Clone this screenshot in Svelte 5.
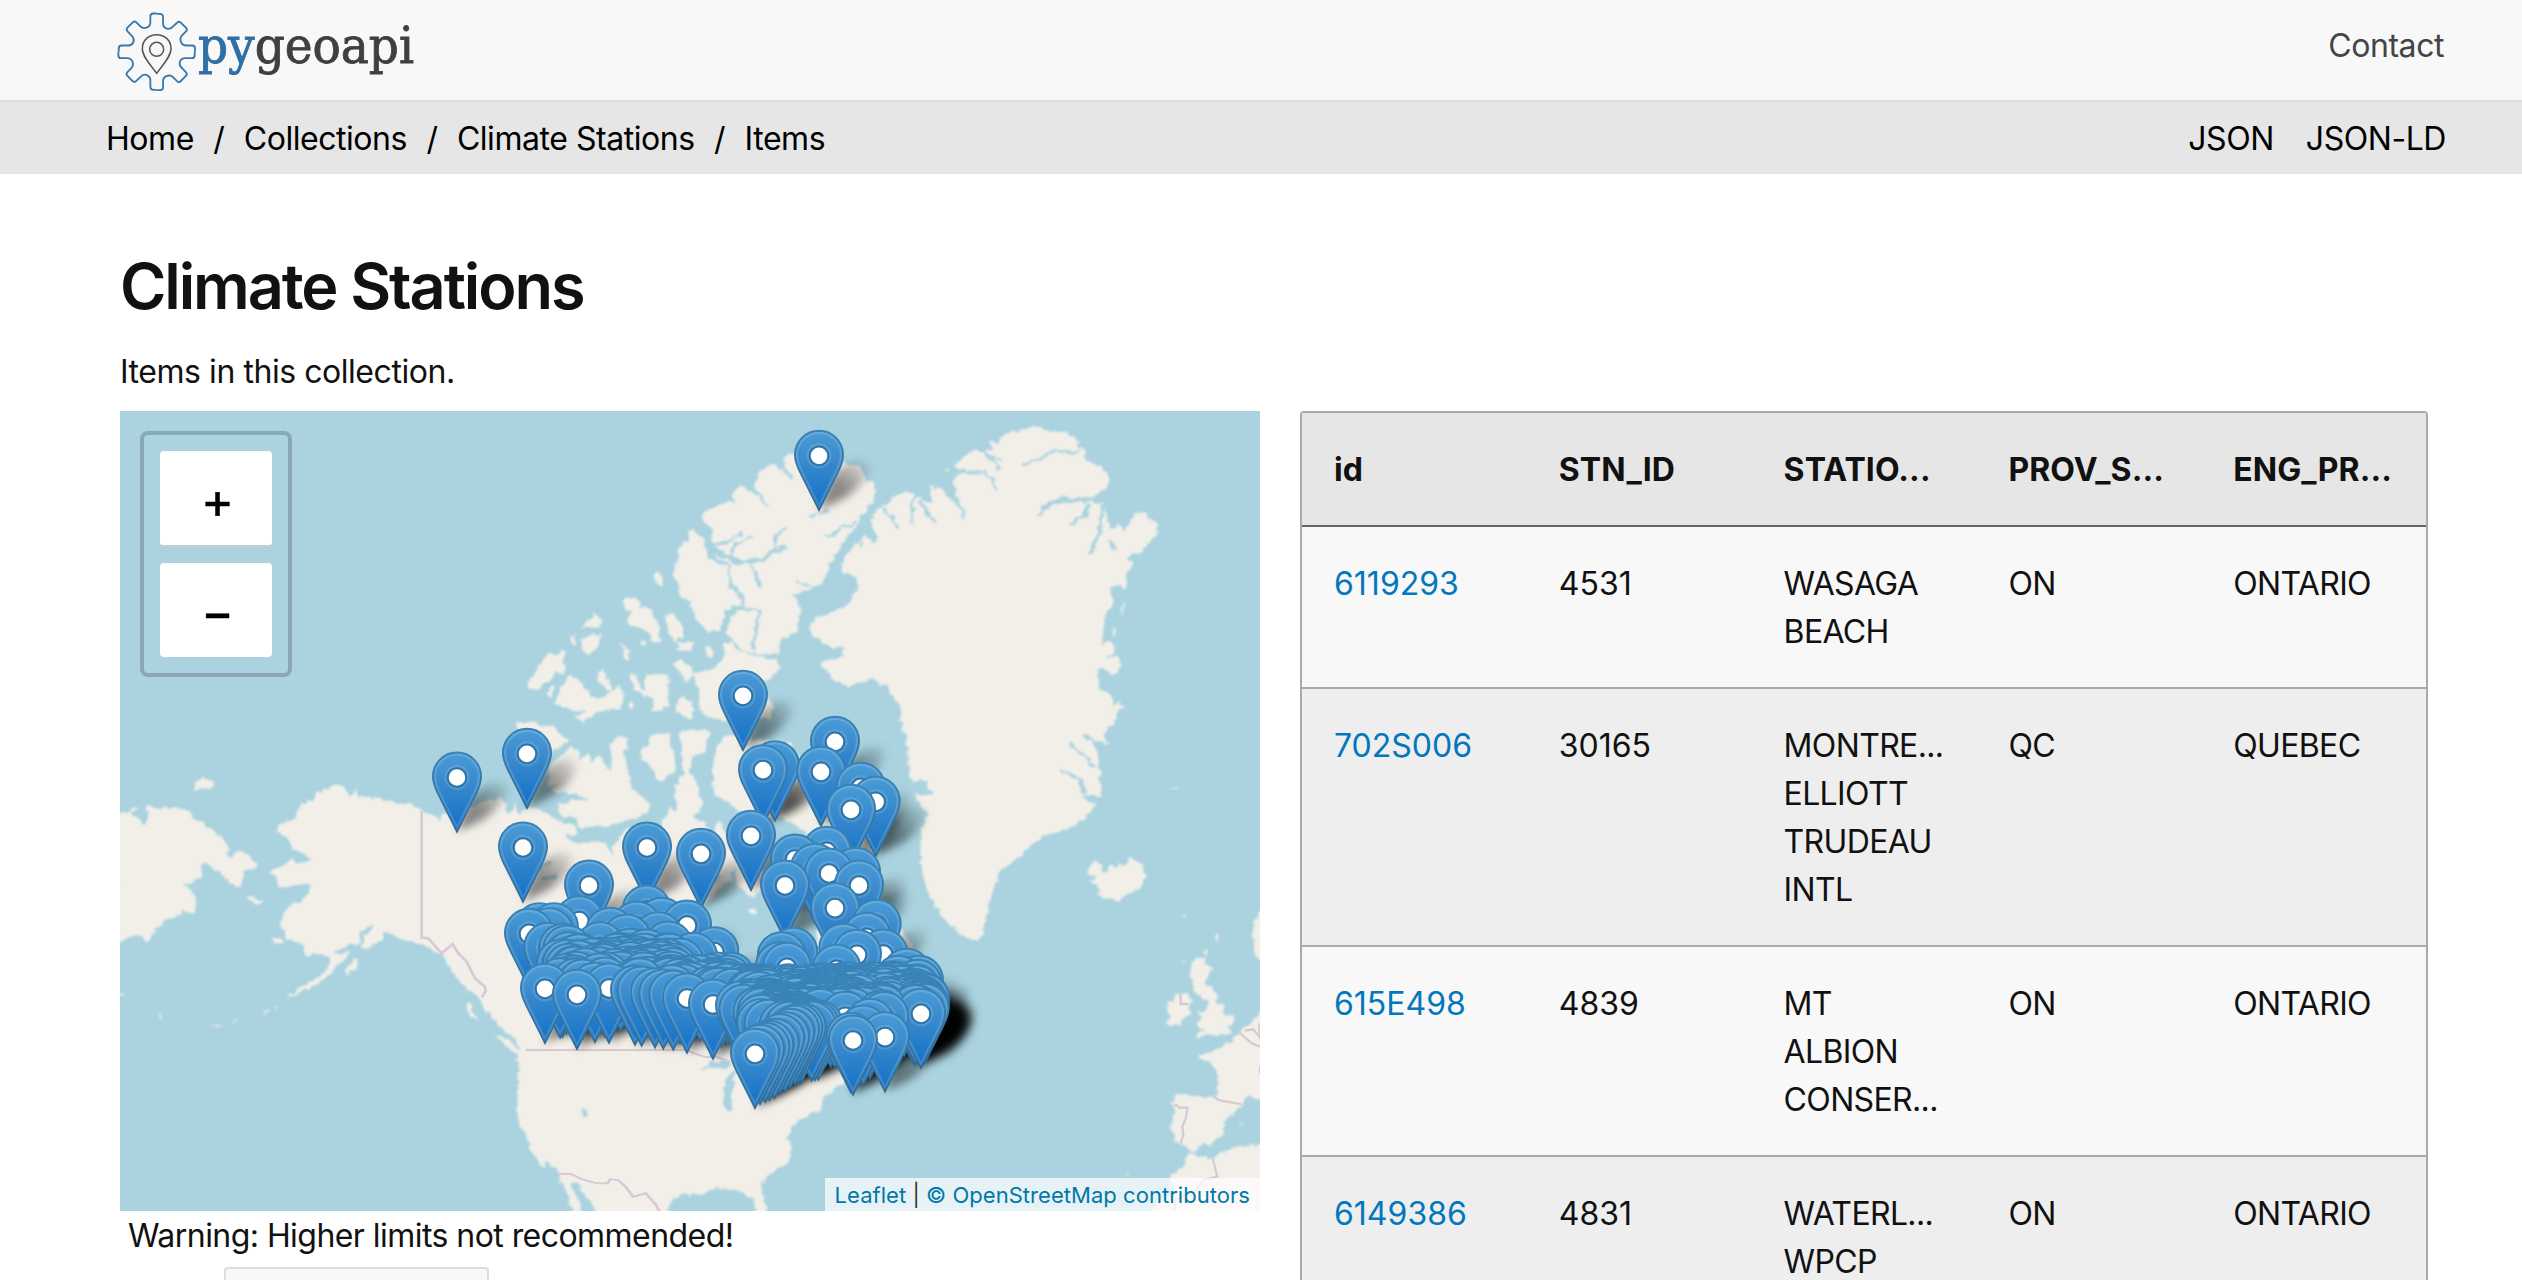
<script>
  const crumbs = ['Home', 'Collections', 'Climate Stations', 'Items'];
  const columns = ['id', 'STN_ID', 'STATIO...', 'PROV_S...', 'ENG_PR...'];
  const rows = [
    ['6119293', '4531', ['WASAGA', 'BEACH'], 'ON', 'ONTARIO'],
    ['702S006', '30165', ['MONTRE...', 'ELLIOTT', 'TRUDEAU', 'INTL'], 'QC', 'QUEBEC'],
    ['615E498', '4839', ['MT', 'ALBION', 'CONSER...'], 'ON', 'ONTARIO'],
    ['6149386', '4831', ['WATERL...', 'WPCP'], 'ON', 'ONTARIO'],
  ];

  // Marker head centres, in thirds of a pixel from (480, 680).
  const named = [
    [1017, -674], [-69, 291], [789, 46], [1065, 184], [885, 257], [849, 269], [1023, 274], [1142, 322],
    [1187, 364], [1113, 388], [141, 220], [813, 466], [129, 501], [501, 501], [663, 520], [327, 615],
    [1040, 514], [945, 537], [1005, 565], [1128, 577], [1047, 579], [915, 615], [1137, 615], [1065, 683],
    [298, 722], [500, 690], [178, 743], [222, 743], [207, 758], [147, 760], [390, 757], [470, 738],
    [545, 727], [621, 735], [205, 802], [440, 777], [535, 770], [565, 798], [640, 832], [703, 815],
    [360, 800], [250, 805], [262, 810], [300, 835], [410, 835], [450, 820], [500, 822], [530, 850],
    [195, 925], [291, 943], [387, 924], [345, 922], [465, 930], [485, 933], [525, 938], [550, 942],
    [580, 945], [621, 954], [699, 972], [780, 978], [1190, 733], [1160, 772], [1210, 822], [1131, 823],
    [1090, 805], [1070, 868], [940, 817], [905, 830], [921, 862], [900, 860], [1280, 880], [1310, 930],
    [1323, 1000], [1334, 985], [1215, 1070], [1119, 1080], [1112, 1072], [825, 1120], [995, 1038],
    [840, 1108], [856, 1102], [868, 1096], [884, 1090], [900, 1076], [915, 1070], [930, 1060], [945, 1050],
    [1015, 1034], [1150, 1050], [1170, 1030], [1005, 1036], [955, 1045], [965, 1042],
  ];

  let seed = 7;
  const rand = () => (seed = (seed * 16807) % 2147483647) / 2147483647;
  function scatter(n, x0, x1, y0, y1) {
    const pts = [];
    for (let i = 0; i < n; i++) pts.push([x0 + rand() * (x1 - x0), y0 + rand() * (y1 - y0)]);
    return pts;
  }
  const markers = [
    ...named,
    ...scatter(75, 240, 600, 830, 915),
    ...scatter(30, 560, 760, 890, 940),
    ...scatter(120, 790, 1130, 925, 1000),
    ...scatter(70, 830, 970, 980, 1040),
    ...scatter(60, 980, 1230, 920, 1010),
    ...scatter(35, 1210, 1325, 900, 970),
    ...scatter(25, 1300, 1336, 950, 990),
  ]
    .sort((a, b) => a[1] - b[1])
    .map(([x, y]) => [480 + x / 3, 680 + y / 3]);

  const quarter =
    'M0,-114 H10 Q19,-114 19,-105 V-85 Q19,-73 32,-69 Q42,-67 50,-77 L62,-88 Q67,-93 73,-87 L89,-71 Q93,-66 88,-61 L76,-49 Q68,-41 73,-29 Q77,-19 89,-19 H107 Q115,-19 115,-10 V0';
</script>

<header>
  <svg class="logo" width="340" height="100" viewBox="110 0 340 100" role="img" aria-label="pygeoapi">
    <g transform="translate(156.7 51.8) scale(0.3333)" fill="none" stroke="#3a78ac" stroke-width="5.5">
      {#each [0, 90, 180, 270] as a}
        <path d={quarter} transform="rotate({a})" />
      {/each}
    </g>
    <g transform="translate(110 0) scale(0.3333)" fill="none" stroke="#555" stroke-width="4.5">
      <path d="M140,220 C122,195 97,170 97,146 C97,120 117,104 140,104 C163,104 183,120 183,146 C183,170 158,195 140,220Z" />
      <circle cx="140" cy="148" r="21" />
    </g>
    <text class="brand" x="198" y="63" textLength="216" lengthAdjust="spacingAndGlyphs"><tspan class="py">py</tspan>geoapi</text>
  </svg>
  <a class="contact" href="#contact">Contact</a>
</header>
<nav>
  <ul>
    {#each crumbs as c, i}
      {#if i}<li>/</li>{/if}
      <li>{c}</li>
    {/each}
  </ul>
  <div class="formats"><a href="#json">JSON</a><a href="#jsonld">JSON-LD</a></div>
</nav>
<main>
  <h1>Climate Stations</h1>
  <p class="intro">Items in this collection.</p>
  <div class="grid">
    <section>
      <div class="map">
        <svg class="tiles" width="1140" height="800" viewBox="120 411 1140 800">
          <defs>
            <linearGradient id="pinFill" x1="0" y1="0" x2="0" y2="1">
              <stop offset="0" stop-color="#4a9cd6" />
              <stop offset="0.35" stop-color="#3b8bcd" />
              <stop offset="1" stop-color="#126fc6" />
            </linearGradient>
            <linearGradient id="pinEdge" x1="0" y1="0" x2="0" y2="1">
              <stop offset="0" stop-color="#3883b7" />
              <stop offset="1" stop-color="#2e6c97" />
            </linearGradient>
            <linearGradient id="shadeFill" gradientUnits="userSpaceOnUse" x1="0" y1="0" x2="46" y2="-46">
              <stop offset="0" stop-color="#000" stop-opacity="0.5" />
              <stop offset="0.5" stop-color="#000" stop-opacity="0.42" />
              <stop offset="1" stop-color="#000" stop-opacity="0.08" />
            </linearGradient>
            <filter id="coast" x="0" y="0" width="100%" height="100%">
              <feTurbulence type="fractalNoise" baseFrequency="0.13" numOctaves="2" seed="4" />
              <feDisplacementMap in="SourceGraphic" scale="8" xChannelSelector="R" yChannelSelector="G" />
              <feGaussianBlur stdDeviation="0.8" />
            </filter>
            <filter id="soft" filterUnits="userSpaceOnUse" x="120" y="411" width="1140" height="800">
              <feGaussianBlur stdDeviation="4.5" />
            </filter>
            <g id="pin">
              <path d="M0,-81 C-13.5,-81 -24,-70 -24,-57 C-24,-50 -21.5,-45 -19,-40 L0,-2 L19,-40 C21.5,-45 24,-50 24,-57 C24,-70 13.5,-81 0,-81Z" fill="url(#pinFill)" stroke="url(#pinEdge)" stroke-width="2" />
              <path d="M0,-79 C-12.2,-79 -22,-69 -22,-57 C-22,-50 -19.5,-45 -17,-40 L0,-6 L17,-40 C19.5,-45 22,-50 22,-57 C22,-69 12.2,-79 0,-79Z" fill="none" stroke="#fff" stroke-opacity="0.15" stroke-width="2.2" />
              <circle cy="-56" r="11.5" fill="none" stroke="#fff" stroke-opacity="0.13" stroke-width="2" />
              <circle cy="-56" r="9.3" fill="#fff" stroke="#2f73a6" stroke-width="2" />
            </g>
            <path id="shade" d="M0,0 L10,-26 C16,-42 38,-54 48,-48 C56,-40 40,-20 24,-11Z" fill="url(#shadeFill)" />
          </defs>
          <rect x="120" y="411" width="1140" height="800" fill="#aad3df" />
          <g filter="url(#coast)" fill="#f2efe9">
            <rect x="60" y="351" width="1260" height="920" fill="none" />
            <!-- Siberia, Alaska and the Pacific coast -->
            <g transform="translate(100 760) scale(0.3333)">
              <path d="M50,160 L85,155 L100,140 L118,150 L100,155 L100,172 L122,180 L124,193 L138,192 L146,175 L145,162 L135,155 L142,132 L160,142 L200,146 L235,143 L265,158 L300,180 L330,208 L365,232 L385,255 L388,290 L400,295 L405,275 L440,282 L455,297 L472,315 L455,330 L430,340 L432,365 L420,388 L400,380 L372,350 L365,335 L340,332 L325,310 L308,312 L308,340 L300,355 L270,372 L245,370 L270,385 L280,405 L290,440 L285,460 L250,452 L215,478 L190,490 L155,520 L135,545 L125,528 L100,525 L75,535 L50,550Z" />
              <path d="M278,90 L285,70 L310,55 L340,62 L342,75 L325,85 L300,87Z M440,410 L465,413 L490,430 L475,437 L455,425Z M518,540 L540,530 L547,545 L525,550Z" />
              <path d="M1330,150 L1290,145 L1270,165 L1250,168 L1245,130 L1235,165 L1215,150 L1195,120 L1185,110 L1185,125 L1150,140 L1110,155 L1080,195 L1060,195 L1020,182 L995,162 L965,152 L930,132 L900,132 L860,122 L820,112 L775,110 L765,93 L745,105 L735,85 L700,70 L685,90 L650,97 L640,118 L605,130 L590,160 L580,180 L535,195 L530,212 L565,235 L580,268 L615,280 L635,298 L600,312 L575,300 L540,318 L508,335 L530,350 L535,375 L580,380 L625,370 L628,400 L610,420 L570,435 L550,455 L540,490 L555,515 L558,540 L590,550 L605,545 L612,590 L640,580 L690,590 L710,570 L740,560 L775,545 L785,515 L820,495 L810,510 L795,530 L785,555 L780,570 L810,560 L830,550 L850,535 L855,515 L880,520 L900,540 L950,545 L975,555 L1010,575 L1030,590 L1050,620 L1070,650 L1100,690 L1125,710 L1145,720 L1150,745 L1180,770 L1195,800 L1225,820 L1260,850 L1280,890 L1275,905 L1245,895 L1255,930 L1250,1030 L1255,1080 L1275,1120 L1290,1160 L1315,1205 L1330,1230Z" />
              <path d="M690,585 L740,575 L745,580 L730,600 L700,630 L665,665 L640,680 L600,695 L560,718 L575,700 L610,680 L640,660 L670,640 L690,610Z M735,630 L760,600 L775,600 L770,625 L740,645Z M1098,730 L1120,735 L1118,760 L1135,787 L1112,770Z M1185,822 L1210,828 L1245,860 L1270,882 L1255,885 L1220,860Z M520,745 L535,735 L530,748Z M490,762 L508,752 L505,760Z M390,785 L410,780 L405,788Z M330,795 L365,794 L360,800Z M172,762 L188,765 L180,772Z M60,695 L72,710 L60,708Z" />
            </g>
            <!-- mainland Canada, Baffin Island -->
            <g transform="translate(480 680) scale(0.3333)">
              <path d="M-120,400 L-20,380 L60,350 L90,405 L105,370 L115,410 L140,385 L190,395 L240,425 L285,438 L290,460 L265,475 L300,490 L360,480 L385,500 L395,530 L405,490 L440,450 L480,440 L540,450 L560,400 L590,385 L588,330 L600,290 L620,290 L640,320 L655,350 L660,380 L640,410 L680,430 L700,470 L715,415 L730,440 L740,480 L750,500 L770,540 L750,600 L700,650 L690,660 L650,680 L690,740 L770,800 L800,850 L900,870 L1000,860 L1010,800 L1020,720 L1000,650 L960,600 L1000,590 L1060,640 L1130,660 L1200,640 L1260,740 L1330,840 L1390,930 L1350,1000 L1300,1080 L1200,1080 L1090,1210 L1030,1250 L1025,1280 L970,1320 L150,1320 L150,1160 L60,980 L0,800 L-120,640Z" />
              <path d="M700,300 L697,250 L720,180 L750,165 L800,175 L930,190 L960,230 L1060,300 L1130,350 L1180,420 L1200,480 L1180,530 L1120,530 L1060,500 L1000,480 L940,430 L880,410 L820,430 L750,370 L700,340Z M800,690 L830,680 L830,695 L810,705Z M760,480 L790,470 L870,610 L820,650 L770,620Z" />
              <path d="M265,470 L330,478 L385,455 L400,475 M140,570 L190,560 L215,545 M190,600 L225,590 M640,590 L700,600 L720,580" fill="none" stroke="#aad3df" stroke-width="14" />
            </g>
            <!-- United States, Mexico -->
            <g transform="translate(480 1040) scale(0.5102 0.3333)">
              <path d="M75,35 L75,90 L72,180 L78,240 L95,290 L112,350 L150,385 L160,430 L180,500 L190,530 L370,530 L370,500 L375,480 L400,460 L440,465 L450,447 L500,450 L520,460 L535,470 L540,500 L545,530 L568,530 L555,470 L550,430 L570,400 L605,360 L612,320 L600,300 L610,260 L625,235 L670,210 L668,180 L700,140 L715,125 L700,-40 L120,-40Z" />
              <path d="M176,422 L190,425 L200,450 L215,480 L235,530 L205,530 L195,490 L185,460Z M430,88 L450,72 L475,60 L492,66 L492,82 L470,88 L455,82Z M480,120 L490,95 L502,100 L496,130 L495,200 L485,212 L477,190Z M197,208 L203,210 L209,228 L203,228Z" fill="#aad3df" />
            </g>
            <!-- Arctic archipelago -->
            <g transform="translate(500 540) scale(0.3333)">
              <path d="M640,385 L680,345 L668,315 L690,300 L710,325 L760,345 L830,360 L845,385 L820,410 L780,430 L820,500 L810,540 L760,530 L660,540 L625,530 L600,510 L598,460 L580,400 L610,395Z M520,370 L545,362 L580,380 L578,410 L555,420Z M525,490 L545,468 L575,485 L578,530 L560,535 L530,515Z M530,310 L580,310 L578,332 L535,330Z M615,320 L632,318 L640,340 L630,355 L617,340Z M492,222 L520,225 L550,260 L548,290 L520,305 L505,280Z M368,185 L390,170 L415,180 L420,205 L440,200 L460,225 L475,245 L482,300 L460,303 L430,268 L385,262 L380,235 L395,220 L372,200Z M423,298 L446,303 L430,316Z M362,310 L380,325 L395,360 L373,350Z M462,105 L475,95 L487,110 L488,138 L478,135 L475,118 L465,120Z" />
              <path d="M240,262 L285,225 L307,240 L303,265 L270,258Z M240,300 L303,280 L295,320 L262,343 L242,325Z M210,292 L220,285 L232,305 L222,312Z M78,425 L100,405 L140,345 L170,345 L180,328 L200,340 L190,360 L190,400 L165,395 L150,430 L130,425 L120,450 L85,445Z M135,465 L165,435 L150,475Z M165,490 L180,450 L205,405 L235,420 L270,455 L270,475 L310,475 L330,455 L292,420 L300,400 L315,382 L322,420 L340,450 L360,440 L373,465 L360,505 L300,515 L285,525 L250,548 L220,530 L260,512 L215,510Z M385,395 L410,405 L420,440 L440,450 L430,430 L445,400 L480,400 L505,405 L505,500 L460,510 L460,470 L430,472 L395,430Z M383,490 L395,482 L403,500 L390,508Z" />
              <path d="M45,553 L95,542 L130,560 L165,560 L205,605 L155,640 L100,690 L60,640Z M155,670 L215,615 L230,630 L235,660 L265,635 L275,670 L300,645 L330,700 L335,640 L325,615 L355,590 L388,595 L385,630 L370,640 L390,700 L395,750 L450,790 L450,810 L420,830 L370,845 L330,860 L240,865 L230,835 L180,825 L170,795 L210,780 L265,780 L240,765 L160,755 L150,745 L200,730 L140,740Z M420,635 L440,620 L450,585 L495,572 L515,580 L505,610 L525,640 L525,690 L500,705 L490,727 L470,710 L450,675 L430,660Z M540,580 L560,568 L632,572 L610,640 L575,650 L572,700 L590,730 L608,790 L600,820 L560,815 L530,790 L525,740 L550,705 L545,650Z M485,850 L510,800 L540,845 L520,870Z" />
            </g>
            <!-- Ellesmere and Greenland -->
            <g transform="translate(620 400) scale(0.40816 0.3333)">
              <path d="M165,390 L185,388 L205,420 L215,470 L240,490 L262,500 L266,560 L295,590 L295,615 L262,630 L245,690 L215,695 L180,650 L170,600 L145,590 L150,560 L133,530 L140,480 L150,430 L170,420Z" />
              <path d="M400,170 L430,160 L540,185 L590,200 L600,235 L628,265 L620,300 L590,345 L583,370 L545,430 L520,480 L495,550 L460,570 L420,590 L440,610 L440,660 L430,700 L395,715 L390,760 L340,765 L300,750 L262,700 L270,650 L300,625 L290,570 L272,540 L270,500 L240,470 L225,430 L225,390 L200,360 L205,335 L265,305 L290,310 L275,285 L290,255 L320,275 L345,300 L370,325 L335,270 L330,240 L350,205 L380,190 L420,240 L425,230 L405,200Z" />
              <path d="M1015,85 L1070,95 L1100,100 L1125,125 L1120,145 L1140,150 L1145,185 L1185,205 L1205,237 L1180,275 L1150,290 L1185,305 L1190,330 L1200,390 L1225,370 L1245,385 L1260,335 L1290,342 L1315,370 L1320,395 L1295,430 L1280,455 L1240,475 L1260,490 L1240,530 L1235,560 L1205,565 L1210,610 L1190,640 L1183,700 L1178,740 L1200,720 L1215,745 L1195,775 L1225,770 L1222,820 L1170,805 L1175,870 L1205,880 L1210,920 L1225,905 L1238,925 L1215,930 L1220,955 L1185,1000 L1195,1030 L1165,1030 L1150,1000 L1130,1005 L1165,1040 L1175,1110 L1180,1190 L1130,1190 L1170,1215 L1130,1265 L1090,1290 L1030,1310 L1020,1330 L735,1330 L770,1290 L780,1250 L740,1225 L720,1180 L770,1190 L750,1140 L715,1140 L705,1080 L700,1000 L685,960 L690,930 L670,890 L650,855 L600,840 L555,862 L520,835 L490,790 L540,770 L555,745 L520,745 L480,715 L465,690 L475,660 L520,635 L560,612 L585,560 L578,530 L545,520 L540,495 L570,440 L600,405 L625,435 L632,420 L618,380 L620,340 L640,320 L680,285 L710,272 L725,290 L765,310 L760,255 L785,265 L810,300 L830,320 L808,240 L825,225 L845,222 L890,225 L815,200 L840,170 L870,150 L920,150 L900,130 L925,125 L950,100 L980,90Z" />
              <g fill="none" stroke="#aad3df" stroke-width="9" stroke-linejoin="round">
                <path d="M205,400 L235,455 L290,488 L350,480 L380,450 L410,440" stroke-width="14" />
                <path d="M375,450 L385,405 L408,378 M270,475 L285,430 L325,410 M320,490 L345,560 M230,430 L270,425 L300,395 M262,690 L265,640 L300,625 L342,632 L325,750 M465,350 L510,330 M505,410 L580,365 M435,545 L465,560 M300,620 L295,580" stroke-width="8" />
                <path d="M1125,155 L1060,155 L1030,175 L985,195 M1145,310 L1140,345 L1100,375 M1185,310 L1180,370 L1150,465" />
                <path d="M1025,350 L1040,320 L1080,300 L1185,298" stroke-width="13" />
                <path d="M810,240 L845,360 M825,213 L890,215 L915,240 L918,270 M890,150 L915,185 L930,210 M900,165 L935,180 M720,280 L715,370 M735,300 L770,370 M640,320 L665,350 L680,388 M1212,300 L1222,332 M1210,345 L1240,390 M1200,420 L1215,450 M1100,1030 L1140,1070 L1165,1105 M1080,1110 L1130,1140 L1140,1185" stroke-width="7" />
                <path d="M590,440 L612,345" stroke-width="5" />
              </g>
              <path d="M85,520 L98,515 L104,555 L95,555Z M1350,1170 L1368,1158 L1360,1170Z M795,210 L805,205 L805,215Z M1228,620 L1235,610 L1230,650Z M1205,680 L1218,690 L1208,715Z" />
            </g>
            <path d="M1045,830 L1036,840 L1022,855 L1000,870 L990,900 L985,925 L978,942 L965,937 L950,925 L935,905 L925,885 L920,860 L921,830 L930,810 L938,790 L1000,800Z" />
            <!-- Iceland, Europe, north-west Africa -->
            <g transform="translate(1060 840) scale(0.3333)">
              <path d="M78,97 L105,60 L120,75 L128,95 L145,90 L150,72 L165,85 L180,70 L195,75 L210,58 L240,70 L260,105 L250,135 L210,160 L175,182 L145,178 L105,163 L125,152 L110,130 L82,127 L110,118Z M367,228 L380,225 L378,238Z M466,295 L478,280 L472,305Z M434,340 L443,333 L440,345Z M365,370 L383,360 L372,378Z" />
              <path d="M405,352 L438,352 L430,378 L460,383 L445,410 L430,432 L460,445 L470,480 L492,500 L495,525 L520,525 L522,545 L505,560 L515,575 L480,585 L440,582 L400,602 L415,580 L435,570 L405,555 L425,540 L415,515 L440,510 L445,480 L410,465 L395,445 L400,420 L388,405 L395,370Z M320,487 L340,485 L350,462 L385,460 L397,480 L385,500 L388,530 L365,548 L330,562 L316,550 L330,530 L325,510Z" />
              <path d="M620,205 L600,212 L580,240 L578,290 L588,345 L600,360 L620,365Z M620,505 L600,512 L580,530 L570,550 L535,578 L520,585 L515,605 L490,620 L465,622 L458,635 L415,645 L420,658 L450,665 L472,695 L478,730 L468,768 L400,768 L360,762 L338,778 L345,810 L332,870 L345,910 L365,910 L395,935 L420,918 L460,912 L490,880 L490,850 L510,825 L545,800 L548,780 L565,767 L600,775 L620,775Z M620,912 L550,918 L500,930 L465,955 L430,950 L400,940 L385,945 L370,980 L335,1005 L330,1060 L290,1090 L265,1130 L620,1130Z M536,855 L548,850 L550,860Z M198,1000 L206,1002 L200,1006Z" />
            </g>
          </g>
          <g fill="none" stroke="#d9c9d4">
            <g transform="translate(100 760) scale(0.3333)" stroke-width="8">
              <path d="M965,152 V533 L985,535 L1025,580 L1058,552 L1075,580 L1100,605 L1125,655 L1155,680 L1157,695 L1145,712 M1278,870 H1330" />
            </g>
            <g transform="translate(480 1040) scale(0.5102 0.3333)" stroke-width="6">
              <path d="M90,30 H405 L420,40 L440,50 L465,52 L490,65 M155,402 L178,402 L200,418 L230,430 L250,430 L255,418 L270,420 L285,440 L300,470 L325,460 L345,495 L352,515" />
            </g>
            <g transform="translate(1060 840) scale(0.3333)" stroke-width="7">
              <path d="M362,462 V492 H385 M340,798 L350,795 L358,803 L382,803 L378,835 L367,860 L370,885 L362,910 M460,768 L475,780 L500,785 L545,793 M535,575 L575,610 L600,620 M555,572 L580,568 L598,590 V550 M600,680 V700 M458,955 L472,1010 L430,1020 L410,1050 L345,1080 V1110" />
            </g>
          </g>
          <g filter="url(#soft)">
            {#each markers as [x, y]}<use href="#shade" x={x} y={y + 54.5} />{/each}
          </g>
          {#each markers as [x, y]}<use href="#pin" x={x} y={y + 56.5} />{/each}
        </svg>
        <div class="zoom">
          <button class="in" aria-label="Zoom in">+</button>
          <button aria-label="Zoom out">−</button>
        </div>
        <div class="credit"><a href="#leaflet">Leaflet</a> | <a href="#osm">© OpenStreetMap contributors</a></div>
      </div>
      <p class="warning">Warning: Higher limits not recommended!</p>
      <div class="limit"></div>
    </section>
    <table>
      <thead>
        <tr>{#each columns as c}<th>{c}</th>{/each}</tr>
      </thead>
      <tbody>
        {#each rows as r}
          <tr>
            <td><a href="#{r[0]}">{r[0]}</a></td>
            <td>{r[1]}</td>
            <td class="name">{#each r[2] as line}<div>{line}</div>{/each}</td>
            <td class="name">{r[3]}</td>
            <td class="name">{r[4]}</td>
          </tr>
        {/each}
      </tbody>
    </table>
  </div>
</main>

<style>
  :global(body) { background: #fff; overflow: hidden; }
  :global(#app) { height: 1280px; overflow: hidden; font-family: Inter, 'Liberation Sans', sans-serif; font-size: 32px; line-height: 48px; letter-spacing: -0.45px; color: #111; }
  a { text-decoration: none; color: inherit; }
  header { height: 100px; background: #f8f8f8; border-bottom: 2px solid #ddd; display: flex; justify-content: space-between; padding: 0 78px 0 110px; }
  .logo { display: block; overflow: visible; letter-spacing: 0; }
  .brand { font-family: 'DejaVu Serif', serif; font-size: 51px; fill: #3f3f3f; stroke: #3f3f3f; stroke-width: 0.9px; }
  .py { fill: #306fa5; stroke: #306fa5; }
  .contact { color: #444; padding-top: 22px; }
  nav { height: 72px; background: #e6e6e6; color: #000; display: flex; justify-content: space-between; align-items: center; padding: 2px 76px 0 106px; box-sizing: border-box; }
  ul { list-style: none; margin: 0; padding: 0; display: flex; gap: 19.4px; }
  .formats { display: flex; gap: 32px; }
  main { padding: 64px 94px 0 120px; }
  h1 { font-size: 63px; line-height: 96px; font-weight: 600; letter-spacing: -2.1px; margin: 0; }
  .intro { margin: 14px 0 15px; }
  .grid { display: grid; grid-template-columns: 1140px 1128px; gap: 40px; align-items: start; }
  .map { position: relative; height: 800px; }
  .tiles { display: block; }
  .zoom { position: absolute; left: 20px; top: 20px; width: 152px; height: 246px; box-sizing: border-box; border: 4px solid rgba(0, 0, 0, 0.2); border-radius: 8px; padding: 16px; display: flex; flex-direction: column; gap: 16px; }
  button { height: 94px; border: 0; border-radius: 4px; background: #fff; font: 400 50px/88px Inter, sans-serif; padding: 4px 0 0 3px; color: #000; -webkit-text-stroke: 0.5px #000; }
  button.in { height: 96px; border-bottom: 2px solid #ccc; }
  .credit { position: absolute; right: 0; bottom: 0; height: 33px; background: rgba(255, 255, 255, 0.7); padding: 0 10px; font-size: 22px; line-height: 34px; letter-spacing: 0.04px; color: #333; }
  .credit a { color: #0078a8; }
  .warning { margin: 0 0 0 8px; padding-top: 1px; letter-spacing: -0.55px; }
  .limit { width: 261px; height: 60px; margin: 7px 0 0 104px; border: 2px solid #ddd; border-radius: 4px; background: #f8f8f8; }
  table { border: 2px solid #aaa; border-radius: 4px; border-spacing: 0; table-layout: fixed; width: 1128px; background: #f8f8f8; }
  th, td { text-align: left; vertical-align: top; padding: 33px 0 31px 32px; letter-spacing: 0; }
  th { background: #e6e6e6; border-bottom: 2px solid #666; font-weight: 700; letter-spacing: 0.1px; }
  td { border-bottom: 2px solid #aaa; }
  td.name { letter-spacing: -0.65px; }
  tbody tr:nth-child(even) td { background: #eee; }
  td a { color: #0277bd; }
</style>
